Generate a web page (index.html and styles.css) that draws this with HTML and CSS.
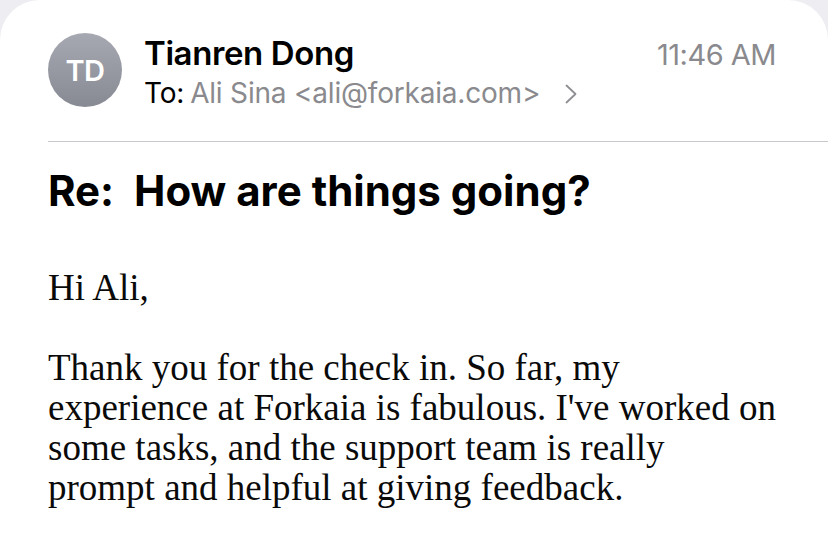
FILE: index.html
```html
<!DOCTYPE html>
<html>
<head>
<meta charset="utf-8">
<link rel="stylesheet" href="styles.css">
</head>
<body>
<div class="sheet">
  <header class="head">
    <div class="avatar">TD</div>
    <div class="meta">
      <div class="row1">
        <span class="name">Tianren Dong</span>
        <span class="time">11:46 AM</span>
      </div>
      <div class="to"><span class="to-label">To:</span> <span class="to-val">Ali Sina &lt;ali@forkaia.com&gt;</span>
        <svg class="chev" width="14" height="22" viewBox="0 0 14 22"><path d="M2.5 2.5 L11.5 11 L2.5 19.5" fill="none" stroke="#8e8e93" stroke-width="1.8" stroke-linecap="round" stroke-linejoin="round"/></svg>
      </div>
    </div>
  </header>
  <div class="sep"></div>
  <h1 class="subject">Re:&nbsp; How are things going?</h1>
  <div class="body">
    <p>Hi Ali,</p>
    <p>Thank you for the check in. So far, my<br>experience at Forkaia is fabulous. I've worked on<br>some tasks, and the support team is really<br>prompt and helpful at giving feedback.</p>
  </div>
</div>
</body>
</html>
```
FILE: styles.css
```css
html, body { margin: 0; padding: 0; }
body { background: #eeeef2; width: 828px; height: 549px; overflow: hidden; }
.sheet {
  background: #fff;
  border-top-left-radius: 40px;
  border-top-right-radius: 40px;
  height: 549px;
  box-sizing: border-box;
  padding-top: 33px;
}
.head {
  display: flex;
  align-items: flex-start;
  padding: 0 52px 0 48px;
  gap: 22px;
}
.avatar {
  width: 74px; height: 74px; border-radius: 50%;
  background: linear-gradient(#a6a9b1, #878a93);
  color: #fff;
  font-family: Inter, "Liberation Sans", sans-serif;
  font-weight: 600;
  font-size: 29px;
  display: flex; align-items: center; justify-content: center;
  letter-spacing: -0.5px;
  flex: none;
}
.meta { flex: 1; font-family: Inter, "Liberation Sans", sans-serif; }
.row1 { display: flex; justify-content: space-between; align-items: baseline; height: 40px; }
.name { font-size: 33px; font-weight: 600; color: #000; letter-spacing: -0.4px; line-height: 40px; }
.time { font-size: 29px; color: #8a8a8e; letter-spacing: -0.5px; }
.to { font-size: 28px; line-height: 36px; color: #000; display: flex; align-items: center; gap: 8px; letter-spacing: -0.2px; margin-top: 2px; }
.to-val { color: #8a8a8e; margin-left: -2px; }
.chev { margin-left: 16px; margin-top: 2px; }
.sep { height: 1px; background: #c8c8cc; margin: 30px 0 0 48px; }
.subject {
  margin: 26px 0 0 48px;
  font-family: Inter, "Liberation Sans", sans-serif;
  font-weight: 700;
  font-size: 42px;
  line-height: 46px;
  letter-spacing: 0;
  color: #000;
}
.body {
  margin: 54px 0 0 48px;
  font-family: "Liberation Serif", Georgia, serif;
  font-size: 37px;
  line-height: 40px;
  color: #0a0a0a;
  white-space: nowrap;
}
.body p { margin: 0 0 40px 0; }
```
